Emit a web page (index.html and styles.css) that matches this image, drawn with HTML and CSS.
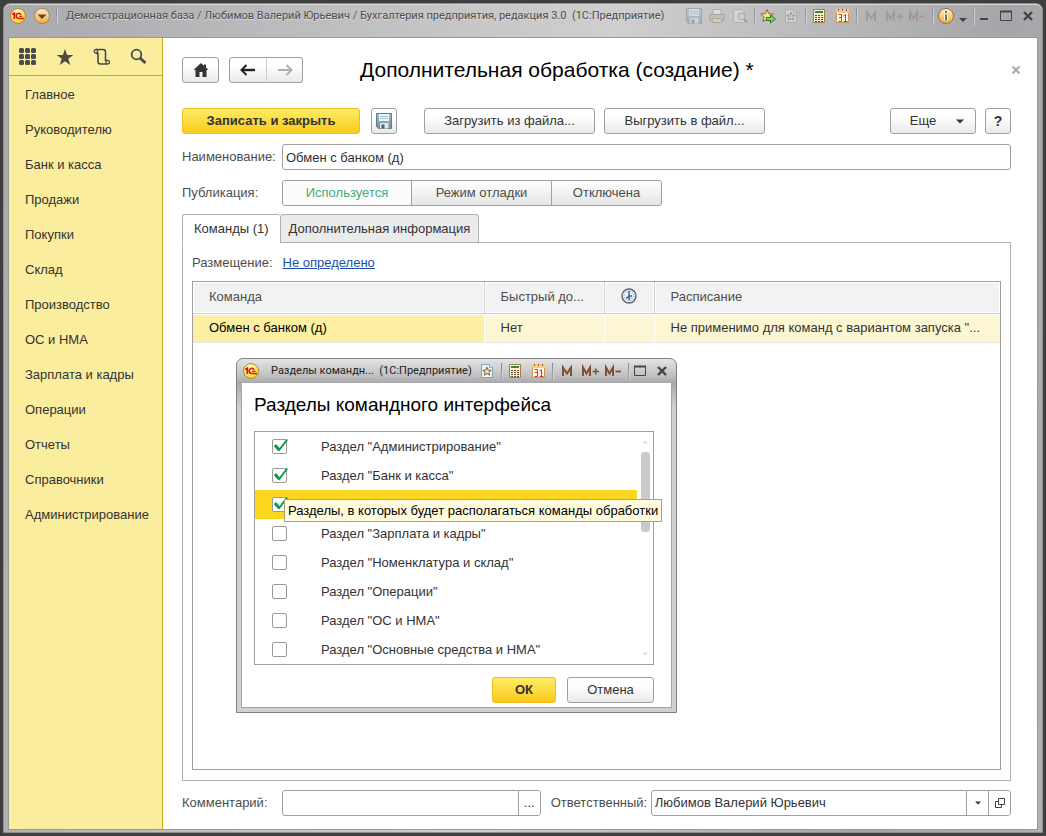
FILE: index.html
```html
<!DOCTYPE html>
<html lang="ru">
<head>
<meta charset="utf-8">
<title>Дополнительная обработка (создание)</title>
<link rel="stylesheet" href="styles.css">
</head>
<body>
<svg class="sprite" aria-hidden="true">
  <defs>
    <radialGradient id="g-logo" cx=".4" cy=".3" r=".8"><stop offset="0" stop-color="#fffbd0"/><stop offset=".6" stop-color="#ffe650"/><stop offset="1" stop-color="#f5b400"/></radialGradient>
    <linearGradient id="g-orange" x1="0" y1="0" x2="0" y2="1"><stop offset="0" stop-color="#ffeccb"/><stop offset="1" stop-color="#f6a93c"/></linearGradient>
    <linearGradient id="g-disk" x1="0" y1="0" x2="0" y2="1"><stop offset="0" stop-color="#a5c0d0"/><stop offset="1" stop-color="#6d8ea5"/></linearGradient>
  </defs>
  <symbol id="i-logo" viewBox="0 0 16 16">
    <circle cx="8" cy="8" r="7.5" fill="url(#g-logo)" stroke="#a88a4a"/>
    <path d="M2.300 6.500 4.300 5.200V11" fill="none" stroke="#d8150c" stroke-width="1.700"/>
    <path d="M11 7A2.500 2.500 0 1 0 8.800 10.400H14" fill="none" stroke="#d8150c" stroke-width="1.500"/>
    <path d="M9 8.300H12.500" stroke="#d8150c" stroke-width="1.200"/>
  </symbol>
  <symbol id="i-disk" viewBox="0 0 16 16">
    <path d="M.5.5h15v15H2.500L.5 13.500z" fill="url(#g-disk)" stroke="#5b7d94"/>
    <path d="M3 1h10v7H3z" fill="#eef7fb"/><path d="M4 3.500h8M4 5.500h8" stroke="#9dc0d2"/>
    <path d="M4 10h8.500v5.500H4z" fill="#e2e6e8"/><path d="M5.500 11.500h3v4h-3z" fill="#4b6577"/>
  </symbol>
  <symbol id="i-bookmark" viewBox="0 0 16 16">
    <path d="M2.500 1.500h8l3 3v10h-11z" fill="#e9f2f8" stroke="#8aa3b5"/><path d="M10.500 1.500v3h3" fill="#fff" stroke="#8aa3b5"/>
    <path d="M8 4.200 9.200 7.100 12.200 7.300 9.900 9.200 10.700 12.200 8 10.500 5.300 12.200 6.100 9.200 3.800 7.300 6.800 7.100z" fill="#f8dfa0" stroke="#6b5a3a" stroke-width=".9"/>
  </symbol>
  <symbol id="i-calc" viewBox="0 0 16 16">
    <path d="M2.500 1.500h11v13h-11z" fill="#fff1cf" stroke="#a47d45"/><path d="M4 3h8v2H4z" fill="#2f8c3c"/>
    <path d="M4 7.500h2M7 7.500h2M4 9.500h2M7 9.500h2M10 9.500h2M4 11.500h2M7 11.500h2M10 11.500h2M4 13.500h2M7 13.500h2M10 13.500h2" stroke="#5d4a33"/><path d="M10 7.500h2" stroke="#e02a1c"/>
  </symbol>
  <symbol id="i-calendar" viewBox="0 0 16 16">
    <path d="M2.500 2.500h12v12h-12z" fill="#fff6e4" stroke="#c7995a"/><path d="M2 1h13v4H2z" fill="#f4c98a"/>
    <path d="M4.500 1v2M8.500 1v2M12.500 1v2" stroke="#8d6531"/>
    <path d="M4.500 6.500H7.500V13.500H4.500M5 9.500H7.500M9.500 8 11.500 6.500V13.500M9.500 13.500h4" fill="none" stroke="#e0361f"/>
  </symbol>
  <symbol id="i-max" viewBox="0 0 12 12"><path d="M.5 1.500h11v9H.5z" fill="none" stroke="#444"/><path d="M0 1.500h12" stroke="#444" stroke-width="2"/></symbol>
  <symbol id="i-close" viewBox="0 0 10 10"><path d="M1 1 9 9M9 1 1 9" stroke="#444" stroke-width="2.400"/></symbol>
  <symbol id="i-m" viewBox="0 0 18 16"><path d="M5 13V4.500L9 10.500 13 4.500V13" fill="none" stroke="#805030" stroke-width="2"/></symbol>
  <symbol id="i-mplus" viewBox="0 0 18 16"><path d="M2 13V4.500L5.500 10.500 9 4.500V13" fill="none" stroke="#805030" stroke-width="2"/><path d="M11.500 8.500H18M14.700 5.500v6" stroke="#805030" stroke-width="1.600"/></symbol>
  <symbol id="i-mminus" viewBox="0 0 18 16"><path d="M2 13V4.500L5.500 10.500 9 4.500V13" fill="none" stroke="#805030" stroke-width="2"/><path d="M11.500 8.500H17" stroke="#805030" stroke-width="1.800"/></symbol>
  <symbol id="i-check" viewBox="0 0 16 16"><path d="M2 7.200 6.200 12 14.200 1.500" fill="none" stroke="#0a9a48" stroke-width="2"/><path d="M2 7.200 6.200 12" stroke="#0a9a48" stroke-width="3"/></symbol>
</svg>

<div class="window">
  <header class="titlebar">
    <svg class="icon"><use href="#i-logo"/></svg>
    <button class="tool menu-tool" aria-label="Меню"><svg class="icon" viewBox="0 0 16 16"><circle cx="8" cy="8" r="7.500" fill="url(#g-orange)" stroke="#a8834e"/><path d="M3.500 6.500h9L8 11z" fill="#574a38"/></svg></button>
    <i class="sep"></i>
    <div class="caption">Демонстрационная база / Любимов Валерий Юрьевич / Бухгалтерия предприятия, редакция 3.0 &nbsp;(1С:Предприятие)</div>
    <div class="tools">
      <button class="tool faded" aria-label="Сохранить"><svg class="icon"><use href="#i-disk"/></svg></button>
      <button class="tool faded" aria-label="Печать"><svg class="icon" viewBox="0 0 16 16"><path d="M4 1.500h8v5H4z" fill="#fff" stroke="#8c8c8c"/><path d="M1 6.500h14v6H1z" fill="#b9b9bd" stroke="#77777c"/><path d="M3.500 10.500h9v4h-9z" fill="#f7d9a8" stroke="#98805c"/></svg></button>
      <button class="tool faded" aria-label="Предварительный просмотр"><svg class="icon" viewBox="0 0 16 16"><path d="M1.500 1.500h8l3 3v10h-11z" fill="#e6eff5" stroke="#8aa3b5"/><circle cx="9.500" cy="8.500" r="3.500" fill="#cfe4f0" stroke="#6f8796"/><path d="m12 11 3 3.500" stroke="#a56b39" stroke-width="2.200"/></svg></button>
    </div>
    <i class="sep"></i>
    <div class="tools">
      <button class="tool" aria-label="Добавить в избранное"><svg class="icon" viewBox="0 0 16 16"><path d="M7 1.500 8.800 5.700 13.500 6 10 9 11 13.500 7 11.200 3 13.500 4 9 .8 6 5.200 5.700z" fill="#fbdc98" stroke="#8a6a35"/><path d="M6.500 9.500h4v-2.500l5 4-5 4v-2.500h-4z" fill="#7fd35b" stroke="#2f7a25"/></svg></button>
      <button class="tool faded" aria-label="Избранное"><svg class="icon"><use href="#i-bookmark"/></svg></button>
    </div>
    <i class="sep"></i>
    <div class="tools">
      <button class="tool" aria-label="Калькулятор"><svg class="icon"><use href="#i-calc"/></svg></button>
      <button class="tool" aria-label="Календарь"><svg class="icon"><use href="#i-calendar"/></svg></button>
    </div>
    <i class="sep"></i>
    <div class="tools memory">
      <button class="tool faint" aria-label="M"><svg class="icon-m"><use href="#i-m"/></svg></button>
      <button class="tool faint" aria-label="M+"><svg class="icon-m"><use href="#i-mplus"/></svg></button>
      <button class="tool faint" aria-label="M-"><svg class="icon-m"><use href="#i-mminus"/></svg></button>
    </div>
    <i class="sep"></i>
    <div class="tools memory">
      <button class="tool" aria-label="О программе"><svg class="icon" viewBox="0 0 16 16"><circle cx="8" cy="8" r="7.500" fill="url(#g-orange)" stroke="#94703e"/><path d="M8 3v2.200M8 6.500v6" stroke="#fff" stroke-width="3.600"/><path d="M8 3v2M8 6.500v6" stroke="#4d8a3c" stroke-width="2"/></svg></button>
      <button class="tool" aria-label="Ещё"><svg class="icon-drop" viewBox="0 0 8 16"><path d="M0 10h8l-4 4z" fill="#444"/></svg></button>
    </div>
    <i class="sep"></i>
    <div class="tools controls">
      <button class="tool" aria-label="Свернуть"><svg class="icon-x" viewBox="0 0 10 10"><path d="M1 8h8" stroke="#444" stroke-width="2"/></svg></button>
      <button class="tool" aria-label="Развернуть"><svg class="icon-max"><use href="#i-max"/></svg></button>
      <button class="tool" aria-label="Закрыть"><svg class="icon-x"><use href="#i-close"/></svg></button>
    </div>
  </header>

  <div class="workspace">
    <aside class="sidebar">
      <div class="side-tools">
        <button class="side-tool" aria-label="Все функции"><svg class="side-icon" viewBox="0 0 20 20" fill="#4a4a4a"><rect x="1" y="1" width="5" height="5" rx="1.500"/><rect x="7" y="1" width="5" height="5" rx="1.500"/><rect x="13" y="1" width="5" height="5" rx="1.500"/><rect x="1" y="7" width="5" height="5" rx="1.500"/><rect x="7" y="7" width="5" height="5" rx="1.500"/><rect x="13" y="7" width="5" height="5" rx="1.500"/><rect x="1" y="13" width="5" height="5" rx="1.500"/><rect x="7" y="13" width="5" height="5" rx="1.500"/><rect x="13" y="13" width="5" height="5" rx="1.500"/></svg></button>
        <button class="side-tool" aria-label="Избранное"><svg class="side-icon" viewBox="0 0 20 20"><path d="M10 2 12.100 8H18.300L13.300 11.700 15.200 18 10 14.200 4.800 18 6.700 11.700 1.700 8H7.900z" fill="#4a4a4a"/></svg></button>
        <button class="side-tool" aria-label="История"><svg class="side-icon" viewBox="0 0 20 20"><path d="M4 6.500H6V14.500Q6 17 8.500 17H15M4 2.500H11Q13.500 2.500 13.500 5V13.500H16" fill="none" stroke="#4a4a4a" stroke-width="1.600"/><circle cx="4" cy="4.300" r="1.800" fill="none" stroke="#4a4a4a" stroke-width="1.300"/><circle cx="15.700" cy="15.200" r="1.800" fill="#fbed9e" stroke="#4a4a4a" stroke-width="1.300"/></svg></button>
        <button class="side-tool" aria-label="Поиск"><svg class="side-icon" viewBox="0 0 20 20"><circle cx="7.500" cy="7.500" r="4.800" fill="none" stroke="#4a4a4a" stroke-width="1.800"/><path d="m11 11 5.500 5" stroke="#4a4a4a" stroke-width="3"/></svg></button>
      </div>
      <nav class="side-nav">
        <a href="#">Главное</a>
        <a href="#">Руководителю</a>
        <a href="#">Банк и касса</a>
        <a href="#">Продажи</a>
        <a href="#">Покупки</a>
        <a href="#">Склад</a>
        <a href="#">Производство</a>
        <a href="#">ОС и НМА</a>
        <a href="#">Зарплата и кадры</a>
        <a href="#">Операции</a>
        <a href="#">Отчеты</a>
        <a href="#">Справочники</a>
        <a href="#">Администрирование</a>
      </nav>
    </aside>

    <main class="form">
      <div class="heading">
        <button class="btn home" aria-label="Начальная страница"><svg class="icon" viewBox="0 0 16 16"><path d="M8 1 .5 8H2.500V15H6.500V10H9.500V15H13.500V8H15.500L13 5.700V2.500H11V3.800z" fill="#333"/></svg></button>
        <div class="history">
          <button class="btn" aria-label="Назад"><svg class="icon" viewBox="0 0 16 16"><path d="M2.500 8H15" stroke="#222" stroke-width="2.400"/><path d="M6.500 3 1.500 8l5 5" fill="none" stroke="#222" stroke-width="2"/></svg></button>
          <button class="btn" aria-label="Вперед" disabled><svg class="icon" viewBox="0 0 16 16"><path d="M1 8H13.500" stroke="#b0b0b0" stroke-width="2"/><path d="m9.500 3 5 5-5 5" fill="none" stroke="#b0b0b0" stroke-width="2"/></svg></button>
        </div>
        <h1>Дополнительная обработка (создание) *</h1>
        <button class="tool close-form" aria-label="Закрыть форму"><svg class="icon-x" viewBox="0 0 10 10"><path d="M1.500 1.500 8.500 8.500M8.500 1.500 1.500 8.500" stroke="#aaa" stroke-width="2"/></svg></button>
      </div>

      <div class="commands">
        <button class="btn primary save-close">Записать и закрыть</button>
        <button class="btn square save" aria-label="Записать"><svg class="icon"><use href="#i-disk"/></svg></button>
        <button class="btn load">Загрузить из файла...</button>
        <button class="btn unload">Выгрузить в файл...</button>
        <button class="btn more">Еще<svg class="arrow" viewBox="0 0 8 5"><path d="M0 .5h8l-4 4z" fill="#333"/></svg></button>
        <button class="btn square help">?</button>
      </div>

      <div class="row">
        <label class="label" for="name">Наименование:</label>
        <input class="field" id="name" type="text" value="Обмен с банком (д)">
      </div>

      <div class="row">
        <span class="label" id="pub">Публикация:</span>
        <div class="segments" role="radiogroup" aria-labelledby="pub">
          <label class="segment used"><input type="radio" name="pub" checked>Используется</label>
          <label class="segment debug"><input type="radio" name="pub">Режим отладки</label>
          <label class="segment off"><input type="radio" name="pub">Отключена</label>
        </div>
      </div>

      <div class="tabs" role="tablist">
        <button class="tab active" role="tab" aria-selected="true">Команды (1)</button>
        <button class="tab" role="tab" aria-selected="false">Дополнительная информация</button>
      </div>
      <section class="panel">
        <p class="placement"><span>Размещение:</span><a href="#">Не определено</a></p>
        <div class="grid">
          <table>
            <colgroup><col class="c-command"><col class="c-quick"><col class="c-clock"><col></colgroup>
            <thead>
              <tr><th>Команда</th><th>Быстрый до...</th><th class="clock"><svg class="icon" viewBox="0 0 16 16"><circle cx="8" cy="8" r="7" fill="#eaf5fb" stroke="#53677a" stroke-width="1.400"/><circle cx="8" cy="8" r="5" fill="none" stroke="#e05a50" stroke-dasharray="1 1.620"/><path d="M8 8h4.500v2.500L8 13z" fill="#c4e2f4"/><path d="M8 3v9M8 8 5 10.500M8 8h3" fill="none" stroke="#246b9d" stroke-width="1.400"/></svg></th><th>Расписание</th></tr>
            </thead>
            <tbody>
              <tr><td class="current">Обмен с банком (д)</td><td>Нет</td><td></td><td>Не применимо для команд с вариантом запуска "...</td></tr>
            </tbody>
          </table>
        </div>
      </section>

      <div class="footer">
        <label class="label" for="comment">Комментарий:</label>
        <div class="combo comment"><input id="comment" type="text"><button class="pick dots" aria-label="Открыть текст">...</button></div>
        <label class="resp-label" for="resp">Ответственный:</label>
        <div class="combo resp"><input id="resp" type="text" value="Любимов Валерий Юрьевич"><button class="pick" aria-label="Выбрать"><svg class="arrow-small" viewBox="0 0 6 4"><path d="M0 .5h6l-3 3z" fill="#333"/></svg></button><button class="pick" aria-label="Открыть"><svg class="icon-x" viewBox="0 0 10 10"><path d="M3.500.5h6v6h-6zM3.500 3.500h-3v6h6v-3" fill="none" stroke="#444"/></svg></button></div>
      </div>
    </main>
  </div>

  <div class="dialog" role="dialog" aria-labelledby="dlg">
    <header class="dialog-bar">
      <svg class="icon"><use href="#i-logo"/></svg>
      <div class="dialog-caption">Разделы командн... &nbsp;(1С:Предприятие)</div>
      <button class="tool" aria-label="Избранное"><svg class="icon"><use href="#i-bookmark"/></svg></button>
      <i class="sep"></i>
      <div class="tools">
        <button class="tool" aria-label="Калькулятор"><svg class="icon"><use href="#i-calc"/></svg></button>
        <button class="tool" aria-label="Календарь"><svg class="icon"><use href="#i-calendar"/></svg></button>
      </div>
      <i class="sep"></i>
      <div class="tools memory">
        <button class="tool" aria-label="M"><svg class="icon-m"><use href="#i-m"/></svg></button>
        <button class="tool" aria-label="M+"><svg class="icon-m"><use href="#i-mplus"/></svg></button>
        <button class="tool" aria-label="M-"><svg class="icon-m"><use href="#i-mminus"/></svg></button>
      </div>
      <i class="sep"></i>
      <div class="tools controls">
        <button class="tool" aria-label="Развернуть"><svg class="icon-max"><use href="#i-max"/></svg></button>
        <button class="tool" aria-label="Закрыть"><svg class="icon-x"><use href="#i-close"/></svg></button>
      </div>
    </header>
    <div class="dialog-body">
      <h2 id="dlg">Разделы командного интерфейса</h2>
      <div class="list">
        <div class="items">
          <label class="item"><span class="box"><input type="checkbox" checked><svg><use href="#i-check"/></svg></span>Раздел "Администрирование"</label>
          <label class="item"><span class="box"><input type="checkbox" checked><svg><use href="#i-check"/></svg></span>Раздел "Банк и касса"</label>
          <label class="item selected"><span class="box"><input type="checkbox" checked><svg><use href="#i-check"/></svg></span></label>
          <label class="item"><span class="box"><input type="checkbox"></span>Раздел "Зарплата и кадры"</label>
          <label class="item"><span class="box"><input type="checkbox"></span>Раздел "Номенклатура и склад"</label>
          <label class="item"><span class="box"><input type="checkbox"></span>Раздел "Операции"</label>
          <label class="item"><span class="box"><input type="checkbox"></span>Раздел "ОС и НМА"</label>
          <label class="item"><span class="box"><input type="checkbox"></span>Раздел "Основные средства и НМА"</label>
        </div>
        <div class="scroll">
          <svg class="arrow-small" viewBox="0 0 6 4"><path d="M0 3.500h6l-3-3z" fill="#ddd"/></svg>
          <div class="thumb"></div>
          <svg class="arrow-small" viewBox="0 0 6 4"><path d="M0 .5h6l-3 3z" fill="#ddd"/></svg>
        </div>
      </div>
      <div class="dialog-buttons">
        <button class="btn primary ok">ОК</button>
        <button class="btn cancel">Отмена</button>
      </div>
    </div>
    <div class="tooltip" role="tooltip">Разделы, в которых будет располагаться команды обработки</div>
  </div>
</div>
</body>
</html>
```
FILE: styles.css
```css
* { box-sizing: border-box; }

body {
  margin: 0;
  min-height: 100vh;
  padding: 3px;
  display: flex;
  background: #3e3e3e;
  color: #333;
  font: 13px/16px "Liberation Sans", Arial, sans-serif;
}

button, input {
  font: inherit;
  color: inherit;
  margin: 0;
}

svg { display: block; flex: none; }
.sprite { position: absolute; width: 0; height: 0; }
.icon { width: 16px; height: 16px; }
.icon-m { width: 18px; height: 16px; }
.icon-drop { width: 8px; height: 16px; }
.icon-max { width: 12px; height: 12px; }
.icon-x { width: 10px; height: 10px; }
.arrow { width: 8px; height: 5px; }
.arrow-small { width: 6px; height: 4px; }

.window {
  position: relative;
  flex: 1;
  min-width: 0;
  display: flex;
  flex-direction: column;
  padding: 0 4px 2px;
  border: 1px solid #8f8f91;
  border-radius: 7px 7px 0 0;
  background: linear-gradient(100deg, #a9a9ad, #b9b9bb 20%, #cfcfcf 52%, #a6a6aa 85%, #b2b2b6);
  box-shadow: inset 0 1px #d5d5d5;
}

.titlebar {
  display: flex;
  align-items: center;
  height: 33px;
  padding: 0 5px 9px 2px;
}

.tool {
  display: flex;
  align-items: center;
  padding: 0;
  border: 0;
  background: none;
}

.menu-tool { margin-left: 8px; }
.tools { display: flex; align-items: center; gap: 7px; }
.tools.memory { gap: 5px; }
.tools.controls { gap: 11px; }
.faded { opacity: .4; }
.faint { opacity: .25; }

.sep {
  width: 1px;
  height: 17px;
  margin: 0 5px 0 6px;
  background: linear-gradient(#8a8a8d, #aaa);
  box-shadow: 1px 0 #d0d0d0;
}

.caption {
  flex: 1;
  min-width: 0;
  padding-left: 4px;
  overflow: hidden;
  white-space: nowrap;
  color: #4c4c50;
  font: 11px/16px Roboto, sans-serif;
  text-shadow: 0 1px #dedede;
}

.workspace {
  flex: 1;
  display: flex;
  border: 1px solid #98989a;
  background: #fff;
}

.sidebar {
  width: 154px;
  border-right: 1px solid #c4aa1f;
  background: #fbed9e;
}

.side-tools {
  display: flex;
  gap: 17px;
  height: 38px;
  padding: 0 9px;
  align-items: center;
  border-bottom: 1px solid #c4aa1f;
}

.side-tool { padding: 0; border: 0; background: none; }
.side-icon { width: 20px; height: 20px; }
.side-nav { padding-top: 1px; }

.side-nav a {
  display: block;
  padding-left: 16px;
  line-height: 35px;
  color: #333;
  text-decoration: none;
}

.form {
  flex: 1;
  min-width: 0;
  display: flex;
  flex-direction: column;
  padding: 19px 26px 13px 19px;
}

.btn {
  display: flex;
  align-items: center;
  justify-content: center;
  height: 26px;
  padding: 0;
  border: 1px solid #a0a0a0;
  border-radius: 3px;
  background: linear-gradient(#fff 30%, #e9e9e9);
}

.btn.primary {
  border-color: #f2bd1d;
  background: linear-gradient(#ffec66, #f9cb1b);
  font-weight: bold;
}

.heading {
  display: flex;
  align-items: center;
  margin-right: -10px;
}

.home { width: 37px; }
.history { display: flex; margin-left: 10px; }
.history .btn { width: 38px; border-radius: 3px 0 0 3px; }
.history .btn + .btn { width: 37px; margin-left: -1px; border-left-color: #ccc; border-radius: 0 3px 3px 0; }

h1 {
  flex: 1;
  margin: 0 0 0 57px;
  color: #000;
  font-size: 21px;
  line-height: 26px;
  font-weight: normal;
}

.commands { display: flex; margin-top: 25px; }
.save-close { width: 178px; }
.square { width: 26px; }
.save { margin-left: 11px; }
.load { width: 171px; margin-left: 27px; }
.unload { width: 161px; margin-left: 9px; }
.more { width: 86px; margin-left: auto; gap: 20px; padding-left: 8px; }
.help { margin-left: 9px; font-size: 14px; font-weight: bold; }

.row { display: flex; align-items: center; margin-top: 10px; }
.label { width: 100px; color: #4d4d4d; }

.field, .combo {
  height: 26px;
  border: 1px solid #a0a0a0;
  border-radius: 3px;
  background: #fff;
}

.field { flex: 1; min-width: 0; padding: 0 3px; }

.segments {
  display: flex;
  height: 26px;
  border: 1px solid #a0a0a0;
  border-radius: 3px;
  background: linear-gradient(#fff, #e5e5e5);
  color: #4d4d4d;
}

.segment {
  position: relative;
  display: flex;
  align-items: center;
  justify-content: center;
}

.segment input {
  position: absolute;
  inset: 0;
  appearance: none;
}

.segment + .segment { border-left: 1px solid #a0a0a0; }
.used { width: 128px; background: #fcfcfc; color: #45ad78; border-radius: 3px; }
.debug { width: 140px; }
.off { width: 110px; }

.tabs { display: flex; margin-top: 8px; z-index: 1; }

.tab {
  height: 29px;
  margin-bottom: -1px;
  padding: 0 8px;
  border: 1px solid #b0b0b0;
  border-radius: 3px 3px 0 0;
  background: #ebebeb;
}

.tab.active { padding: 0 11px; border-bottom-color: #fff; border-right: 0; background: #fff; }

.panel {
  flex: 1;
  display: flex;
  flex-direction: column;
  padding: 12px 9px 10px;
  border: 1px solid #b0b0b0;
}

.placement { display: flex; gap: 10px; margin: 0; color: #4d4d4d; }
.placement a { color: #1a4fb0; }
.grid { flex: 1; margin-top: 10px; border: 1px solid #a0a0a0; }

table { width: 100%; border-collapse: collapse; table-layout: fixed; }
.c-command { width: 291px; }
.c-quick { width: 120px; }
.c-clock { width: 50px; }

th, td {
  padding: 0 0 0 16px;
  overflow: hidden;
  white-space: nowrap;
  text-align: left;
  font-weight: normal;
}

th {
  height: 31px;
  border-right: 1px solid #ccc;
  border-bottom: 1px solid #ccc;
  background: #f2f2f2;
  color: #4d4d4d;
  box-shadow: inset 0 0 0 1px #fff;
}

th:last-child { border-right: 0; }
.clock .icon { margin-bottom: 2px; }
td { height: 29px; border-right: 1px solid #fff; border-bottom: 1px solid #e6e6e6; background: #fdf6d3; box-shadow: inset 0 1px #fff; }
td:last-child { border-right: 0; }
td.current { background: #fcefa3; color: #000; }

.footer { display: flex; align-items: center; margin-top: 9px; }
.combo { display: flex; overflow: hidden; }
.combo input { flex: 1; min-width: 0; padding: 0 3px; border: 0; outline: 0; background: none; }
.comment { flex: 258; }
.resp { flex: 360; }
.resp-label { width: 110px; padding-left: 10px; color: #4d4d4d; white-space: nowrap; }

.pick {
  display: flex;
  align-items: center;
  justify-content: center;
  width: 22px;
  padding: 0;
  border: 0;
  border-left: 1px solid #a0a0a0;
  background: #fff;
}

.dialog {
  position: absolute;
  left: 232px;
  top: 354px;
  width: 441px;
  padding: 0 4px 4px;
  border: 1px solid #808082;
  border-radius: 7px 7px 0 0;
  background: linear-gradient(#e4e4e4, #bdbdbf 18px, #a9a9ad 24px, #cfd0d0 50px);
}

.dialog-bar {
  display: flex;
  align-items: center;
  height: 24px;
  padding: 0 5px 0 2px;
}

.dialog-caption {
  flex: 1;
  min-width: 0;
  padding-left: 12px;
  white-space: nowrap;
  color: #222;
  font: 11px/16px Roboto, sans-serif;
}

.dialog-body {
  padding: 11px 17px 4px 12px;
  border: 1px solid #a5a5a5;
  border-top: 0;
  background: #fff;
}

h2 {
  margin: 0;
  color: #000;
  font-size: 19px;
  line-height: 22px;
  font-weight: normal;
}

.list { display: flex; margin-top: 15px; border: 1px solid #a0a0a0; }
.items { flex: 1; }

.item {
  display: flex;
  align-items: center;
  height: 29px;
  padding-left: 17px;
}

.selected { background: #fbd81f; }
.box { position: relative; width: 15px; margin-right: 34px; }

.box input {
  display: block;
  width: 15px;
  height: 15px;
  appearance: none;
  border: 1px solid #999;
  border-radius: 2px;
  background: #fff;
}

.box svg { position: absolute; left: 1px; top: -1px; width: 16px; height: 16px; }

.scroll {
  display: flex;
  flex-direction: column;
  align-items: center;
  width: 16px;
  padding: 8px 0;
}

.thumb { width: 9px; height: 80px; margin: 8px 0 auto; border-radius: 3px; background: #cacaca; }

.dialog-buttons { display: flex; justify-content: flex-end; gap: 11px; margin-top: 12px; }
.ok { width: 64px; }
.cancel { width: 87px; }

.tooltip {
  position: absolute;
  left: 47px;
  top: 140px;
  padding: 3px 3px 2px;
  border: 1px solid #a9a27c;
  background: #fffbdc;
  color: #000;
  white-space: nowrap;
}
```
